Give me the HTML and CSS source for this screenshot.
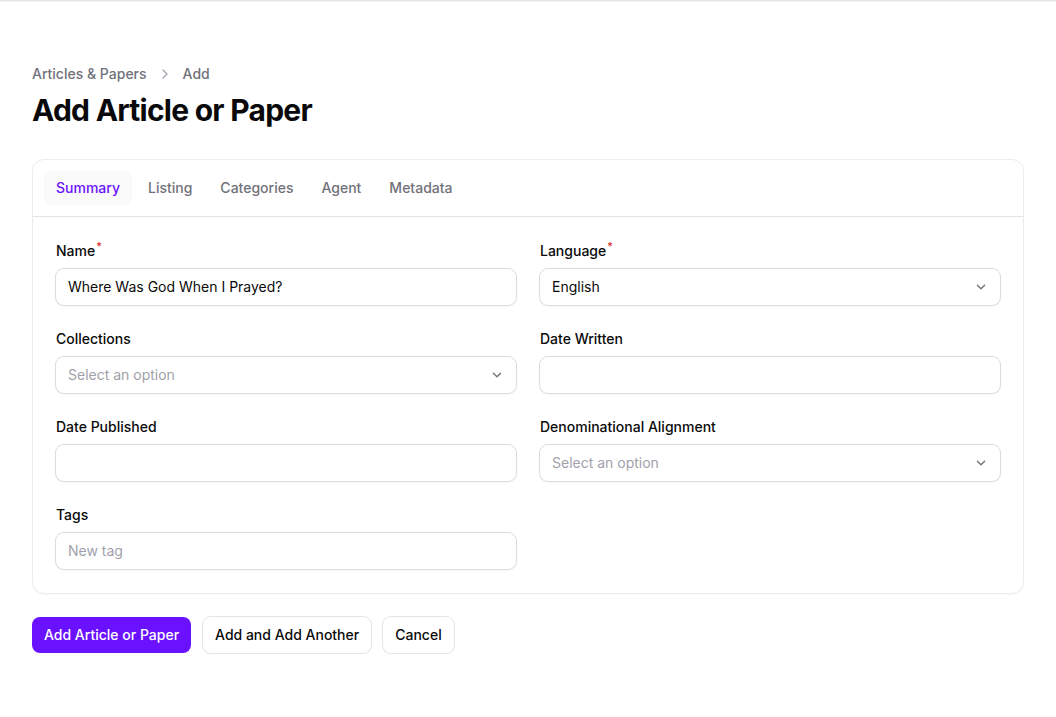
FILE: index.html
```html
<!DOCTYPE html>
<html lang="en">
<head>
<meta charset="utf-8">
<title>Add Article or Paper</title>
<link rel="stylesheet" href="styles.css">
</head>
<body>
<div class="topbar"></div>
<main class="page">
  <header class="page-header">
    <nav class="breadcrumbs">
      <span class="crumb">Articles &amp; Papers</span>
      <svg class="crumb-sep" viewBox="0 0 20 20" width="16" height="16" aria-hidden="true"><path d="M7.5 5l5 5-5 5" fill="none" stroke="currentColor" stroke-width="1.5" stroke-linecap="round" stroke-linejoin="round"/></svg>
      <span class="crumb">Add</span>
    </nav>
    <h1 class="title">Add Article or Paper</h1>
  </header>

  <section class="card">
    <div class="tabs">
      <button class="tab active">Summary</button>
      <button class="tab">Listing</button>
      <button class="tab">Categories</button>
      <button class="tab">Agent</button>
      <button class="tab">Metadata</button>
    </div>
    <div class="card-body">
      <div class="field">
        <label class="label">Name<sup class="req">*</sup></label>
        <div class="input"><span class="value">Where Was God When I Prayed?</span></div>
      </div>
      <div class="field">
        <label class="label">Language<sup class="req">*</sup></label>
        <div class="input select"><span class="value">English</span><svg class="chev" viewBox="0 0 20 20" width="20" height="20"><path d="M6 8l4 4 4-4" fill="none" stroke="currentColor" stroke-width="1.5" stroke-linecap="round" stroke-linejoin="round"/></svg></div>
      </div>
      <div class="field">
        <label class="label">Collections</label>
        <div class="input select"><span class="placeholder">Select an option</span><svg class="chev" viewBox="0 0 20 20" width="20" height="20"><path d="M6 8l4 4 4-4" fill="none" stroke="currentColor" stroke-width="1.5" stroke-linecap="round" stroke-linejoin="round"/></svg></div>
      </div>
      <div class="field">
        <label class="label">Date Written</label>
        <div class="input"></div>
      </div>
      <div class="field">
        <label class="label">Date Published</label>
        <div class="input"></div>
      </div>
      <div class="field">
        <label class="label">Denominational Alignment</label>
        <div class="input select"><span class="placeholder">Select an option</span><svg class="chev" viewBox="0 0 20 20" width="20" height="20"><path d="M6 8l4 4 4-4" fill="none" stroke="currentColor" stroke-width="1.5" stroke-linecap="round" stroke-linejoin="round"/></svg></div>
      </div>
      <div class="field">
        <label class="label">Tags</label>
        <div class="input"><span class="placeholder">New tag</span></div>
      </div>
    </div>
  </section>

  <div class="actions">
    <button class="btn primary">Add Article or Paper</button>
    <button class="btn">Add and Add Another</button>
    <button class="btn">Cancel</button>
  </div>
</main>
</body>
</html>
```

FILE: styles.css
```css
* { box-sizing: border-box; }
html, body { margin: 0; padding: 0; background: #ffffff; }
body {
  font-family: Inter, "Noto Sans", "Liberation Sans", sans-serif;
  color: #0a0a0a;
  -webkit-font-smoothing: antialiased;
}
.topbar { height: 2px; border-top: 1px solid #e5e7eb; background: #f4f4f5; }
.page { padding: 62px 32px 40px 32px; }
.page-header { display: flex; flex-direction: column; gap: 8px; }
.breadcrumbs { display: flex; align-items: center; gap: 10px; font-size: 14px; line-height: 20px; font-weight: 500; color: #71717a; }
.crumb-sep { color: #a1a1aa; }
.title { margin: 0; font-size: 30px; line-height: 36px; font-weight: 700; letter-spacing: -0.75px; color: #09090b; }

.card {
  margin-top: 31px;
  border: 1px solid #ececee;
  border-radius: 12px;
  background: #fff;
  box-shadow: 0 1px 2px rgba(0,0,0,0.03);
}
.tabs {
  display: flex; gap: 4px; padding: 10px 11px;
  border-bottom: 1px solid #e4e4e7;
}
.tab {
  font: inherit; font-size: 14px; line-height: 20px; font-weight: 500;
  color: #71717a; background: transparent; border: 0; border-radius: 8px;
  padding: 8px 12px; height: 36px; cursor: pointer;
}
.tab.active { color: #6a12ff; background: #fafafa; }

.card-body {
  display: grid; grid-template-columns: 1fr 1fr;
  column-gap: 24px; row-gap: 24px;
  padding: 24px 23px 24px 23px;
}
.field { display: flex; flex-direction: column; gap: 8px; }
.label { font-size: 14px; line-height: 20px; font-weight: 500; color: #0a0a0a; }
.req { color: #dc2626; font-size: 11px; line-height: 0; vertical-align: 6px; margin-left: 1px; font-weight: 500; }
.input {
  height: 36px; border-radius: 8px; background: #fff;
  box-shadow: 0 0 0 1px #dcdce0, 0 1px 2px rgba(0,0,0,0.08);
  display: flex; align-items: center; padding: 0 12px;
  font-size: 14px; line-height: 20px;
}
.value { color: #0a0a0a; }
.placeholder { color: #a1a1aa; }
.select { justify-content: space-between; padding-right: 10px; }
.chev { color: #71717a; width: 18px; height: 18px; }

.actions { display: flex; gap: 12px; margin-top: 23px; }
.btn {
  font: inherit; font-size: 14px; line-height: 20px; font-weight: 500;
  height: 36px; padding: 0 12px; border-radius: 8px; border: 0;
  background: #fff; color: #0a0a0a;
  box-shadow: 0 0 0 1px #e4e4e7, 0 1px 2px rgba(0,0,0,0.05);
  cursor: pointer;
}
.btn.primary { background: #6a12ff; color: #fff; box-shadow: none; }
```
